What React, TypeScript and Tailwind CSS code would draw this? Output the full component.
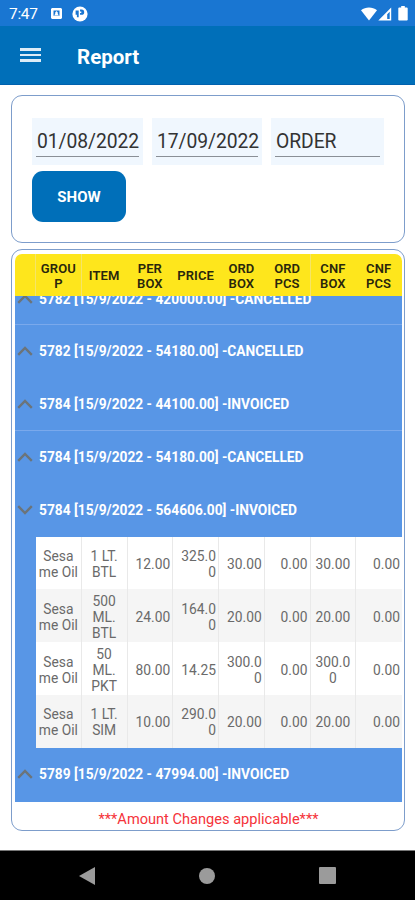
import { clsx } from "clsx";

const COLUMNS = ["", "GROU\nP", "ITEM", "PER\nBOX", "PRICE", "ORD\nBOX", "ORD\nPCS", "CNF\nBOX", "CNF\nPCS"];

type Order = {
  label: string;
  open?: boolean;
  divider?: boolean;
  items?: string[][];
};

const ORDERS: Order[] = [
  { label: "5782 [15/9/2022 - 420000.00] -CANCELLED", divider: true },
  { label: "5782 [15/9/2022 - 54180.00] -CANCELLED" },
  { label: "5784 [15/9/2022 - 44100.00] -INVOICED", divider: true },
  { label: "5784 [15/9/2022 - 54180.00] -CANCELLED" },
  {
    label: "5784 [15/9/2022 - 564606.00] -INVOICED",
    open: true,
    items: [
      ["Sesa\nme Oil", "1 LT.\nBTL", "12.00", "325.0\n0", "30.00", "0.00", "30.00", "0.00"],
      ["Sesa\nme Oil", "500\nML.\nBTL", "24.00", "164.0\n0", "20.00", "0.00", "20.00", "0.00"],
      ["Sesa\nme Oil", "50\nML.\nPKT", "80.00", "14.25", "300.0\n0", "0.00", "300.0\n0", "0.00"],
      ["Sesa\nme Oil", "1 LT.\nSIM", "10.00", "290.0\n0", "20.00", "0.00", "20.00", "0.00"]
    ]
  },
  { label: "5789 [15/9/2022 - 47994.00] -INVOICED" }
];

// group, item and confirmed box are centered, the other numbers sit right
const isCentered = (index: number) => index < 2 || index === 6;

function StatusBar() {
  return (
    <div className="flex h-[26px] items-center bg-[#1976d2] pr-[7px] pl-[9px] text-white">
      <span className="w-[42px] pt-[3px] text-[15.5px] leading-none tracking-[-0.3px]">7:47</span>
      <svg className="mt-px h-[11px] w-[11px]" viewBox="0 0 11 11" fill="currentColor">
        <path fillRule="evenodd" d="M1 0h9l1 1v9l-1 1H1l-1-1V1zM2.5 2.5v5.3h6V2.5z" />
        <path d="M5.5 3 6.8 4.4v1.4l1 1.6H3.2l1-1.6V4.4z" />
      </svg>
      <svg className="mt-px ml-[10px] h-4 w-4" viewBox="0 0 16 16">
        <circle cx="8" cy="8" r="7.6" fill="white" />
        <path d="M3.6 4.4h3.1v6.8H4.9V8.8H3.6zM8 3.6h1.6a2.6 2.6 0 0 1 0 5.2H8V7h1.3V5.4H8z" fill="#1976d2" />
      </svg>
      <div className="mt-px ml-auto flex items-center">
        <svg className="h-[14px] w-4" viewBox="0 0 16 14" fill="currentColor">
          <path d="M0 3.3C4.6-.5 11.4-.5 16 3.3L8 13.5z" />
        </svg>
        <svg className="ml-[1px] h-[14px] w-[14px]" viewBox="0 0 14 14">
          <path fillRule="evenodd" fill="currentColor" d="M13.2.6V13.5H.3zM11.7 4.8 9.2 7.3v4.8h2.5z" />
        </svg>
        <svg className="ml-[6px] h-[15px] w-[10px]" viewBox="0 0 10 15" fill="currentColor">
          <path d="M3.2 0h3.6v1.6h2.3l.6.7v11.6l-.7.7H1l-.7-.7V2.3l.6-.7h2.3z" />
        </svg>
      </div>
    </div>
  );
}

function Field({ value, className }: { value: string; className: string }) {
  return (
    <div className={clsx("h-[47px] bg-[#f0f7fe] px-1 pt-[12px]", className)}>
      <div className="h-[27px] border-b border-[#8a8f96] pl-px text-[19.3px] leading-[24px] tracking-[-0.05px] whitespace-nowrap text-[#333]">
        {value}
      </div>
    </div>
  );
}

function GroupRow({ order }: { order: Order }) {
  return (
    <div
      className={clsx(
        "flex h-[52.8px] items-center border-b pl-[2px]",
        order.divider ? "border-[#7aa9ec]" : "border-transparent"
      )}
    >
      <svg className="h-[10px] w-4" viewBox="0 0 16 10" fill="none" stroke="#6c7479" strokeWidth="2.4">
        <path d={order.open ? "M1.2 1.2 8 8l6.8-6.8" : "M1.2 8.8 8 2l6.8 6.8"} />
      </svg>
      <span className="ml-[6px] text-[13.75px] leading-5 font-bold whitespace-nowrap text-white">{order.label}</span>
    </div>
  );
}

function ItemRow({ cells, shaded }: { cells: string[]; shaded: boolean }) {
  return (
    <div
      className={clsx(
        "ml-[21px] grid h-[52.8px] grid-cols-8 text-[13.8px] leading-4 text-[#6a6a6a]",
        shaded ? "bg-[#f5f5f5]" : "bg-white"
      )}
    >
      {cells.map((cell, index) => (
        <div
          key={index}
          className={clsx(
            "flex items-center border-r border-[#e9e9e9] pt-[2px] whitespace-pre last:border-r-0",
            isCentered(index) ? "justify-center text-center" : "justify-end pr-[2px] text-right"
          )}
        >
          {cell}
        </div>
      ))}
    </div>
  );
}

export default function App() {
  return (
    <div className="flex h-[900px] w-[415px] flex-col overflow-hidden bg-white font-['Roboto',sans-serif]">
      <StatusBar />
      <header className="flex h-[59px] shrink-0 items-center border-b border-[#0061ae] bg-[#006fb9] pl-5 text-white">
        <div className="flex w-[21px] flex-col gap-[3px]">
          <span className="h-[2.5px] bg-[#dcecf7]" />
          <span className="h-[2.5px] bg-[#dcecf7]" />
          <span className="h-[2.5px] bg-[#dcecf7]" />
        </div>
        <h1 className="ml-9 pt-1 text-[20.5px] font-bold">Report</h1>
      </header>

      <main className="flex flex-1 flex-col pt-[10px] pr-[10px] pl-[11px]">
        <section className="h-[148px] rounded-[11px] border border-[#7d9dcb] px-5 pt-[22px]">
          <div className="flex">
            <Field value="01/08/2022" className="w-[111px]" />
            <Field value="17/09/2022" className="ml-[9px] w-[110px]" />
            <Field value="ORDER" className="ml-[9px] w-[113px]" />
          </div>
          <button className="mt-[6px] h-[51px] w-[94px] rounded-[11px] bg-[#006fb9] pt-[2px] text-[15px] font-bold text-white" type="button">
            SHOW
          </button>
        </section>

        <section className="mt-[6px] flex h-[582px] flex-col rounded-[11px] border border-[#7d9dcb] pt-1 pr-[2px] pl-[3px]">
          <div className="grid h-[42px] shrink-0 grid-cols-[21px_repeat(8,1fr)] overflow-hidden rounded-t-[7px] bg-[#fee61c]">
            {COLUMNS.map((name, index) => (
              <div
                key={index}
                className={clsx(
                  "flex items-center justify-center border-r pt-px text-center text-[13px] leading-[15px] font-semibold tracking-[0.1px] whitespace-pre text-[#29260c]",
                  [0, 1, 6].includes(index) ? "border-[#f5e568]" : "border-transparent"
                )}
              >
                {name}
              </div>
            ))}
          </div>
          <div className="h-[506px] shrink-0 overflow-hidden bg-[#5896e6]">
            <div className="-mt-[23.4px]">
              {ORDERS.map((order) => (
                <div key={order.label}>
                  <GroupRow order={order} />
                  {order.items?.map((cells, index) => (
                    <ItemRow key={index} cells={cells} shaded={index % 2 === 1} />
                  ))}
                </div>
              ))}
            </div>
          </div>
          <p className="pt-[7px] text-center text-[14.6px] text-[#f5333a]">***Amount Changes applicable***</p>
        </section>
      </main>

      <nav className="flex h-[50px] shrink-0 items-center justify-between border-t border-[#777] bg-black pr-[79px] pl-[79px] text-[#9b9b9b]">
        <svg className="h-[18px] w-4" viewBox="0 0 16 18" fill="currentColor">
          <path d="M0 9 16 0v18z" />
        </svg>
        <div className="h-4 w-4 rounded-full bg-[#9b9b9b]" />
        <div className="h-[17px] w-[17px] rounded-[1px] bg-[#9b9b9b]" />
      </nav>
    </div>
  );
}
